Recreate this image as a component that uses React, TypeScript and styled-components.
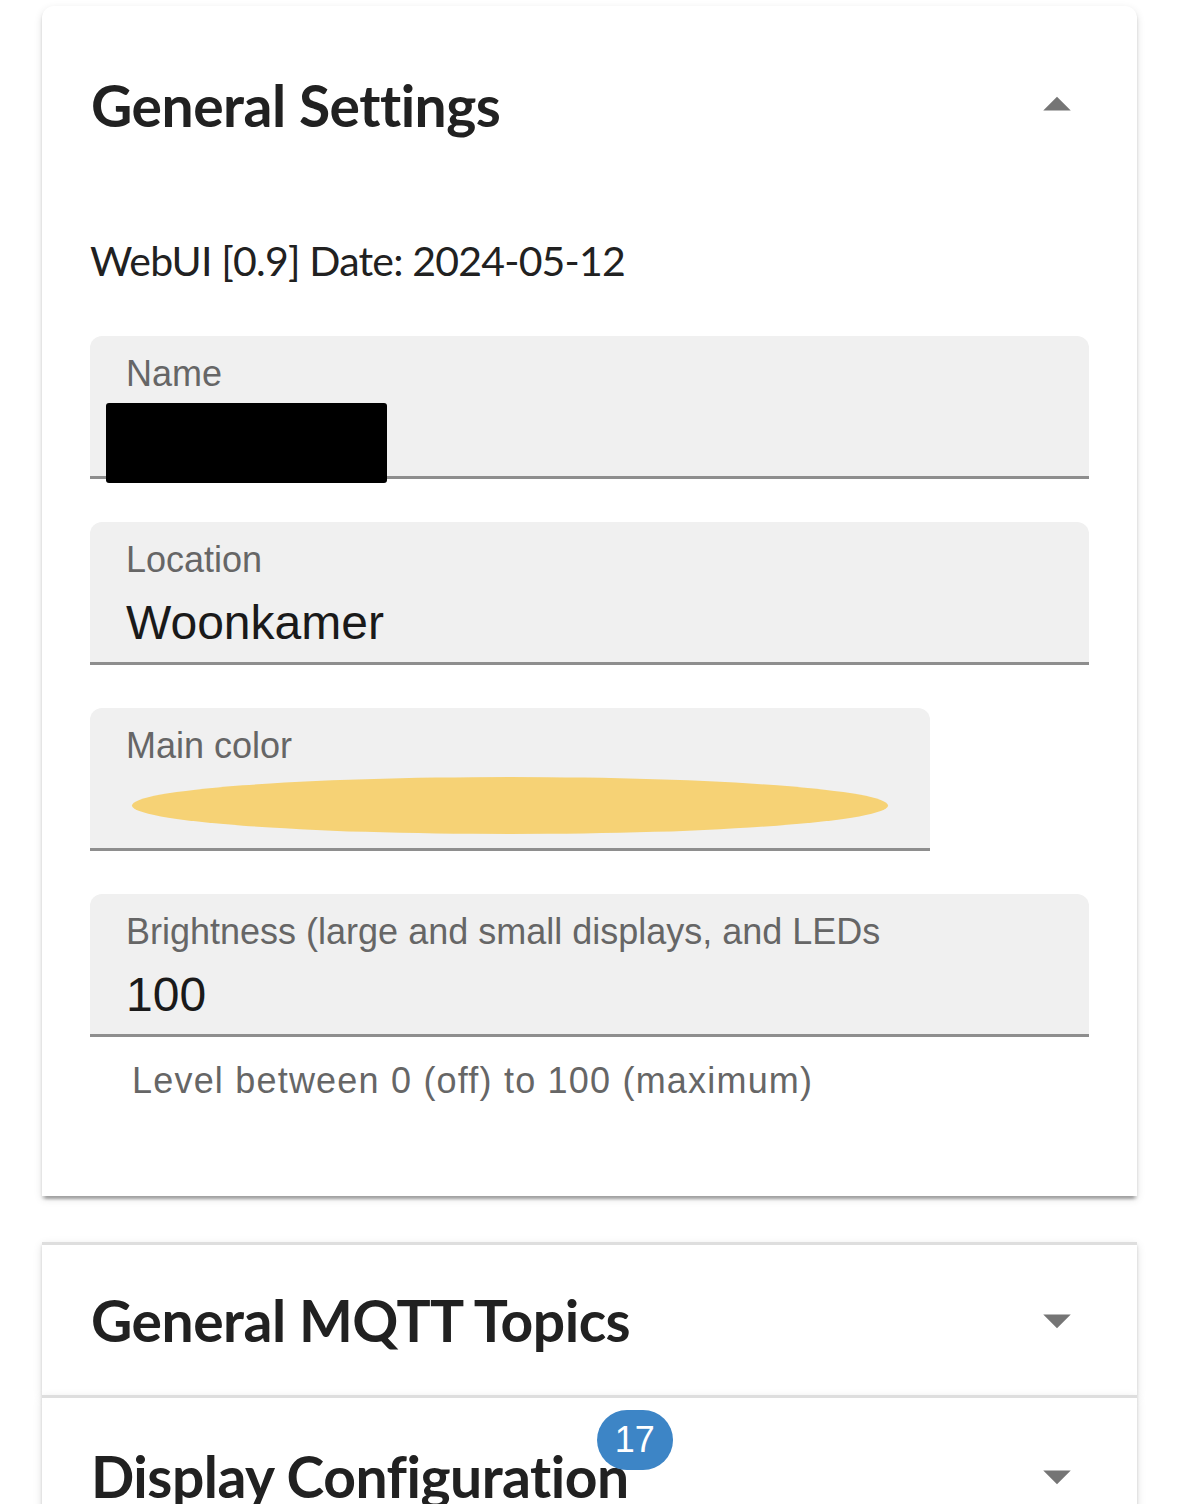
import React from 'react';
import styled, { createGlobalStyle } from 'styled-components';

const GlobalStyle = createGlobalStyle`
  html, body {
    margin: 0;
    padding: 0;
    background: #fff;
  }
  body {
    font-family: "Liberation Sans", Arial, sans-serif;
  }
  * {
    box-sizing: border-box;
  }
`;

const headingFont = `Lato, "Noto Sans", sans-serif`;

const Page = styled.div`
  padding: 6px 42px 0;
  height: 1504px;
  overflow: hidden;
`;

const Card = styled.section<{ $first?: boolean; $expanded?: boolean }>`
  background: #fff;
  border-radius: ${(p) => (p.$first ? '12px 12px 0 0' : '0')};
  border-top: ${(p) => (p.$first ? 'none' : '3px solid #dedede')};
  margin-bottom: ${(p) => (p.$expanded ? '46px' : '0')};
  box-shadow: 0 6px 3px -3px rgba(0, 0, 0, 0.2), 0 3px 3px 0 rgba(0, 0, 0, 0.14),
    0 3px 9px 0 rgba(0, 0, 0, 0.12);
`;

const Summary = styled.div<{ $height: number }>`
  display: flex;
  align-items: center;
  height: ${(p) => p.$height}px;
  padding: 0 47px 0 49px;
`;

const TitleWrap = styled.div`
  flex: 1;
  display: flex;
`;

const Title = styled.h2`
  position: relative;
  margin: 0;
  font-family: ${headingFont};
  font-weight: 700;
  font-size: 57px;
  letter-spacing: -0.5px;
  line-height: 80px;
  color: #212121;
`;

const Badge = styled.span`
  position: absolute;
  top: 4px;
  right: -6px;
  transform: translate(50%, -50%);
  min-width: 74px;
  height: 60px;
  padding: 0 18px;
  border-radius: 30px;
  background: #3d85c6;
  color: #fff;
  font-family: "Liberation Sans", Arial, sans-serif;
  font-size: 36px;
  font-weight: 400;
  letter-spacing: 0;
  line-height: 60px;
  text-align: center;
`;

const Chevron = styled.svg`
  width: 66px;
  height: 66px;
  fill: #757575;
  flex-shrink: 0;
`;

const Details = styled.div`
  padding: 29px 48px 85px;
`;

const Version = styled.div`
  font-family: ${headingFont};
  font-size: 41px;
  letter-spacing: -0.8px;
  line-height: 56px;
  color: #212121;
`;

const Fields = styled.div`
  display: flex;
  flex-direction: column;
  align-items: flex-start;
  gap: 43px;
  margin-top: 47px;
`;

const Field = styled.div<{ $width?: number }>`
  position: relative;
  width: ${(p) => (p.$width ? `${p.$width}px` : '100%')};
  height: 143px;
  padding: 18px 36px 0 36px;
  background: #f0f0f0;
  border-radius: 12px 12px 0 0;
  border-bottom: 3px solid #8e8e8e;
`;

const Label = styled.div`
  font-size: 36px;
  line-height: 40px;
  color: #666;
  white-space: nowrap;
  overflow: hidden;
`;

const Value = styled.div`
  margin-top: 15px;
  font-size: 48px;
  line-height: 56px;
  color: #1a1a1a;
`;

const Swatch = styled.div<{ $color: string }>`
  margin: 11px 0 0 6px;
  width: 756px;
  height: 57px;
  border-radius: 50%;
  background: ${(p) => p.$color};
`;

const Redacted = styled.div`
  position: absolute;
  left: 16px;
  top: 67px;
  width: 281px;
  height: 80px;
  border-radius: 3px;
  background: #000;
`;

const Helper = styled.div`
  margin-top: -29px;
  padding-left: 42px;
  font-size: 36px;
  line-height: 60px;
  letter-spacing: 1.2px;
  color: #666;
`;

const ArrowIcon = ({ up }: { up?: boolean }) => (
  <Chevron viewBox="0 0 24 24">
    <path d={up ? 'M7 14l5-5 5 5z' : 'M7 10l5 5 5-5z'} />
  </Chevron>
);

const App: React.FC = () => {
  return (
    <>
      <GlobalStyle />
      <Page>
        <Card $first $expanded>
          <Summary $height={198}>
            <TitleWrap>
              <Title>General Settings</Title>
            </TitleWrap>
            <ArrowIcon up />
          </Summary>
          <Details>
            <Version>WebUI [0.9] Date: 2024-05-12</Version>
            <Fields>
              <Field>
                <Label>Name</Label>
                <Redacted />
              </Field>
              <Field>
                <Label>Location</Label>
                <Value>Woonkamer</Value>
              </Field>
              <Field $width={840}>
                <Label>Main color</Label>
                <Swatch $color="#f6d275" />
              </Field>
              <Field>
                <Label>Brightness (large and small displays, and LEDs</Label>
                <Value>100</Value>
              </Field>
              <Helper>Level between 0 (off) to 100 (maximum)</Helper>
            </Fields>
          </Details>
        </Card>
        <Card>
          <Summary $height={150}>
            <TitleWrap>
              <Title>General MQTT Topics</Title>
            </TitleWrap>
            <ArrowIcon />
          </Summary>
        </Card>
        <Card>
          <Summary $height={156}>
            <TitleWrap>
              <Title>
                Display Configuration
                <Badge>17</Badge>
              </Title>
            </TitleWrap>
            <ArrowIcon />
          </Summary>
        </Card>
      </Page>
    </>
  );
};

export default App;
